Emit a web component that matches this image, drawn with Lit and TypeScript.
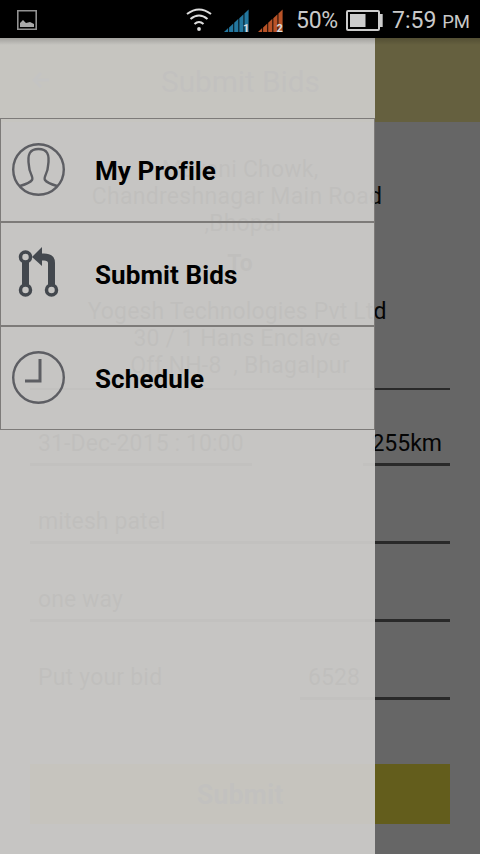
import { LitElement, html, css, svg } from "lit";
import { customElement } from "lit/decorators.js";

const bars = (fill: string) =>
  [0, 1, 2, 3, 4].map(
    (i) => svg`<path fill=${fill} d=${`M${i * 5.1} ${24 - i * 4.6}L${i * 5.1 + 4.2} ${20 - i * 4.6}V24H${i * 5.1}Z`}></path>`
  );

@customElement("app-root")
export class AppRoot extends LitElement {
  static styles = css`
    :host { display: block; width: 480px; height: 854px; overflow: hidden; position: relative; background: #666; color: #050505; font-family: Roboto, "Noto Sans", sans-serif; font-size: 23px; }
    * { box-sizing: border-box; }
    svg { display: block; flex: none; }
    .status { height: 38px; background: #000; color: #c9c9c9; display: flex; align-items: center; padding: 2px 10px 0 16px; white-space: nowrap; }
    .wifi { margin-left: auto; }
    .sim { margin-left: 12px; overflow: visible; }
    .sim + .sim { margin-left: 8px; }
    .sim text { font: 700 11px Roboto, sans-serif; fill: #ddd; }
    .pct { margin-left: 12px; width: 43px; letter-spacing: -0.3px; }
    .batt { margin-left: 7px; }
    .time { margin-left: 9px; width: 78px; display: flex; align-items: baseline; justify-content: space-between; }
    .time small { font-size: 18.5px; }
    .bar { height: 84px; background: #65603f; display: flex; justify-content: center; align-items: center; font-size: 29.7px; color: #222; position: relative; padding: 2px 0 0 1px; }
    .back { position: absolute; left: 32px; top: 33px; }
    .addr { margin: 0 30px; height: 268px; border-bottom: 2px solid #292929; padding-top: 34px; text-align: center; line-height: 27px; white-space: pre; }
    .addr p { margin: 0; letter-spacing: 0.2px; }
    .addr .a1 { letter-spacing: 0.29px; }
    .addr .a2 { letter-spacing: 0.13px; }
    .to { font-weight: 700; padding: 13px 0 21px; }
    .row { display: flex; justify-content: space-between; margin: 0 30px; height: 78px; align-items: flex-end; }
    .row.first { height: 76px; }
    .field { height: 46px; border-bottom: 3px solid #292929; padding: 0 8px; line-height: 48px; flex: 1; letter-spacing: 0.1px; }
    .field.date { flex: 0 0 222px; }
    .field.km { flex: 0 0 86px; letter-spacing: 0; }
    .field.bid { flex: 0 0 150px; }
    .field.plain { border-color: transparent; letter-spacing: 0.2px; }
    .submit { margin: 64px 30px 0; height: 60px; background: #635d1c; text-align: center; line-height: 63px; font-size: 27px; font-weight: 700; color: #222; }
    .drawer { position: absolute; left: 0; top: 38px; width: 375px; height: 816px; padding-top: 80px; background: rgba(204, 203, 201, 0.94); }
    .item { height: 104px; border: 1px solid #7d7b79; display: flex; align-items: center; padding-left: 9px; color: #000; font-weight: 700; font-size: 26px; }
    .item span { padding-top: 2px; letter-spacing: 0.1px; }
    .ic { width: 56px; height: 56px; margin-right: 29px; fill: none; stroke: #5d5e63; stroke-width: 2.4; }
    .ic.route { stroke: #43484e; }
    .shade { position: absolute; left: 0; right: 0; top: 38px; height: 7px; background: linear-gradient(rgba(0, 0, 0, 0.18), transparent); }
  `;

  render() {
    return html`
      <div class="status">
        <svg width="22" height="22" fill="none" stroke="#929292" stroke-width="1.6"><path d="M1.8 1.8H20.2V20.2H1.8Z"/><path d="M4 18V14L7 11 10 14 14 13 18 15V18Z" fill="#aaa" stroke="none"/></svg>
        <svg class="wifi" width="26" height="24" fill="none" stroke="#ddd" stroke-width="2.1"><path d="M1 6Q13-3 25 6M4.5 11Q13 4 21.5 11M8.5 16Q13 12 17.5 16"/><circle cx="13" cy="21" r="1.9" fill="#ddd" stroke="none"/></svg>
        <svg class="sim" width="26" height="24">${bars("#23779f")}<text x="19" y="24">1</text></svg>
        <svg class="sim" width="26" height="24">${bars("#b95327")}<text x="18.5" y="24">2</text></svg>
        <span class="pct">50%</span>
        <svg class="batt" width="37" height="21" fill="none" stroke="#ccc" stroke-width="2"><rect x="1" y="1" width="32" height="19" rx="1"/><path d="M35.2 4V17" stroke-width="3"/><path d="M4 4H19.5V17H4Z" fill="#ccc" stroke="none"/></svg>
        <span class="time"><span>7:59</span><small>PM</small></span>
      </div>
      <div class="bar">
        <svg class="back" width="18" height="18" fill="none" stroke="#4b5560" stroke-width="3"><path d="M17 9H3M9 2L2 9 9 16"/></svg>
        <span>Submit Bids</span>
      </div>
      <div class="addr"><p>Mavani Chowk,</p><p class="a1">Chandreshnagar Main Road </p><p> ,Bhopal</p><p class="to">To</p><p class="a2">Yogesh Technologies Pvt Ltd </p><p>30 / 1 Hans Enclave </p><p>Off NH-8  , Bhagalpur</p></div>
      <div class="row first"><div class="field date">31-Dec-2015 : 10:00</div><div class="field km">255km</div></div>
      <div class="row"><div class="field">mitesh patel</div></div>
      <div class="row"><div class="field">one way</div></div>
      <div class="row"><div class="field plain">Put your bid</div><div class="field bid">6528</div></div>
      <div class="submit">Submit</div>
      <div class="drawer">
        <div class="item"><svg class="ic" viewBox="0 0 56 56"><circle cx="28.500" cy="27.500" r="25.300"/><path d="M10 44Q20 41 22 38C24 35 19 31 19 24C17 12 20 7 28.500 7S40 12 38 24C38 31 33 35 35 38Q37 41 47 44"/></svg><span>My Profile</span></div>
        <div class="item"><svg class="ic route" viewBox="0 0 56 56"><path d="M15.500 16V39M41.500 39V17Q41.500 11 34 11H29" stroke-width="7"/><path d="M22 11L32 1V20Z" fill="#43484e" stroke="none"/><g stroke-width="3.500"><circle cx="15.500" cy="11" r="5"/><circle cx="15.500" cy="44" r="5"/><circle cx="41.500" cy="44" r="5"/></g></svg><span>Submit Bids</span></div>
        <div class="item"><svg class="ic" viewBox="0 0 56 56"><circle cx="28.500" cy="27.500" r="25.300"/><path d="M30 9V31H15" stroke-width="3"/></svg><span>Schedule</span></div>
      </div>
      <div class="shade"></div>
    `;
  }
}
